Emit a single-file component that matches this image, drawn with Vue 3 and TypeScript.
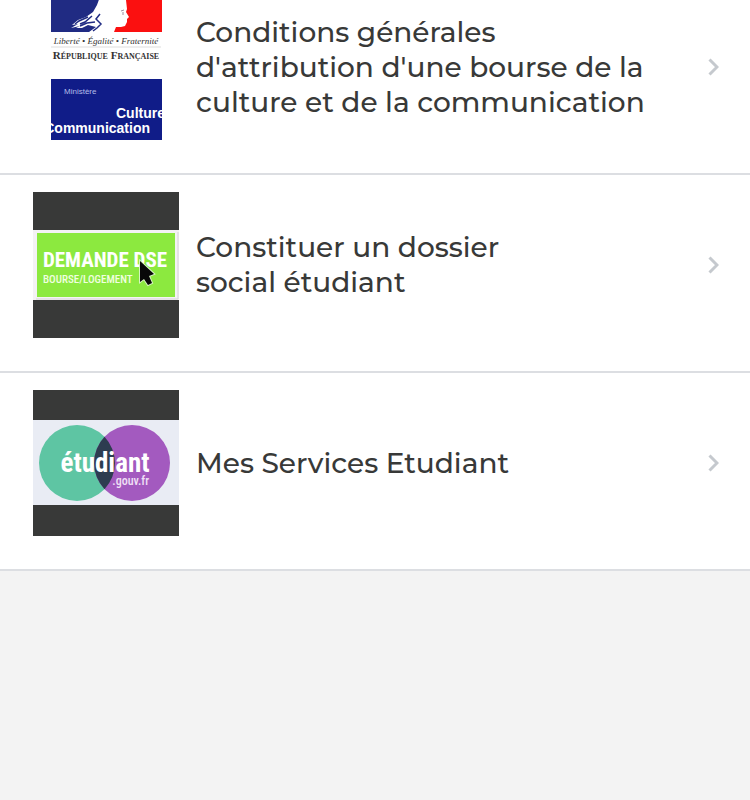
<script setup lang="ts">
type Thumb = 'culture' | 'dse' | 'etudiant'

interface Service {
  id: Thumb
  title: string
  href: string
}

const services: Service[] = [
  {
    id: 'culture',
    title: "Conditions générales d'attribution d'une bourse de la culture et de la communication",
    href: '#culture',
  },
  { id: 'dse', title: 'Constituer un dossier social étudiant', href: '#dse' },
  { id: 'etudiant', title: 'Mes Services Etudiant', href: '#etudiant' },
]
</script>

<template>
  <main class="screen">
    <ul class="list">
      <li v-for="service in services" :key="service.id" class="item">
        <a class="row" :href="service.href">
          <svg v-if="service.id === 'culture'" class="thumb" viewBox="0 0 146 146" aria-hidden="true">
            <defs>
              <clipPath id="ministry"><rect x="18" y="85" width="111" height="61" /></clipPath>
            </defs>
            <rect width="146" height="146" fill="#fff" />
            <path d="M18 0H76V38H18Z" fill="#202b83" />
            <path d="M76 0H129V38H76Z" fill="#fb1010" />
            <path d="M68 0 H88 L93 6 L94 15 L93 18 L96 23 L94 25 L94 28 L92 32 L88 33 L83 33 L81 38 H56 L63 33 L55 31 L49 34 H43 L47 32 L38 34 L45 30 L39 31 L45 26 L53 23 L60 18 L64 11Z" fill="#fff" />
            <path d="M55 23 L46 27 L42 30 M59 22 L52 28 L47 30 M62 28 L54 29 L47 32 M67 20 L63 25 L68 30 L64 34 L60 37" fill="none" stroke="#202b83" stroke-width="1.500" />
            <path d="M88 17 L91 16 M90 18 V21" fill="none" stroke="#9b8e9e" stroke-width="1" />
            <text class="motto" x="73" y="50" text-anchor="middle">Liberté • Égalité • Fraternité</text>
            <path d="M18 53H128" stroke="#ddd" stroke-width="1" />
            <text class="republic" x="73" y="65" text-anchor="middle">R<tspan class="small-caps">ÉPUBLIQUE</tspan> F<tspan class="small-caps">RANÇAISE</tspan></text>
            <rect x="18" y="85" width="111" height="61" fill="#101c88" />
            <g clip-path="url(#ministry)">
              <text class="ministry" x="31" y="100">Ministère</text>
              <text class="domain" x="83" y="124">Culture</text>
              <text class="domain" x="117" y="139" text-anchor="end">Communication</text>
            </g>
          </svg>

          <svg v-else-if="service.id === 'dse'" class="thumb" viewBox="0 0 146 146" aria-hidden="true">
            <rect width="146" height="146" fill="#383938" />
            <rect y="38" width="146" height="70" fill="#f4f2f4" />
            <path d="M3 107H145V40" fill="none" stroke="#d5d2d5" stroke-width="1" />
            <rect x="4" y="41" width="138" height="64" fill="#8ce93f" />
            <text class="dse-title" x="72" y="75" text-anchor="middle">DEMANDE DSE</text>
            <text class="dse-sub" x="10" y="91">BOURSE/LOGEMENT</text>
            <path d="M107 69 V90 L111 87 L115 93 L119 91 L116 84 L121 82Z" fill="#080808" stroke="#d5f4c0" stroke-width="2" paint-order="stroke" />
          </svg>

          <svg v-else class="thumb" viewBox="0 0 146 146" aria-hidden="true">
            <rect width="146" height="146" fill="#383938" />
            <rect y="30" width="146" height="85" fill="#e9ecf4" />
            <circle cx="44" cy="73" r="38" fill="#5ec5a3" />
            <circle cx="99" cy="73" r="38" fill="#a35abf" />
            <path d="M71.500 46.800 A38 38 0 0 1 71.500 99.200 A38 38 0 0 1 71.500 46.800Z" fill="#2d3c50" />
            <text class="brand" x="72" y="82" text-anchor="middle">étudiant</text>
            <text class="brand-domain" x="116" y="95" text-anchor="end">.gouv.fr</text>
          </svg>

          <span class="title">{{ service.title }}</span>

          <svg class="chevron" viewBox="0 0 12 20" aria-hidden="true">
            <path d="M2.500 2.500 L10 10 L2.500 17.500" />
          </svg>
        </a>
      </li>
    </ul>
  </main>
</template>

<style>
body {
  margin: 0;
  background: #f3f3f3;
}
</style>

<style scoped>
.screen {
  overflow: hidden;
  font-family: Montserrat, Inter, sans-serif;
}

/* The list is scrolled slightly past its first row's top edge. */
.list {
  list-style: none;
  margin: -23px 0 0;
  padding: 0;
  background: #fff;
}

.item {
  border-bottom: 2px solid #dcdee2;
}

.row {
  display: flex;
  align-items: center;
  padding: 17px 31px 33px 33px;
  color: #383938;
  text-decoration: none;
}

.thumb {
  flex: none;
  width: 146px;
  height: 146px;
}

.title {
  flex: 0 1 470px;
  padding-left: 17px;
  font-size: 28px;
  font-weight: 500;
  line-height: 35px;
  text-wrap: pretty;
}

.chevron {
  flex: none;
  width: 12px;
  height: 20px;
  margin-left: auto;
  fill: none;
  stroke: #c5c9ce;
  stroke-width: 3px;
}

.motto {
  font: italic 9px "Liberation Serif", serif;
  fill: #333;
}

.republic {
  font: bold 11px "Liberation Serif", serif;
  fill: #333;
}

.small-caps {
  font-size: 8px;
}

.ministry {
  font: 8px "Liberation Sans", sans-serif;
  fill: #b4bce8;
}

.domain {
  font: bold 14px "Liberation Sans", sans-serif;
  fill: #fff;
}

.dse-title {
  font: bold 21px "Roboto Condensed", "Liberation Sans Narrow", "Liberation Sans", sans-serif;
  fill: #fff;
}

.dse-sub {
  font: 500 11px "Roboto Condensed", "Liberation Sans Narrow", "Liberation Sans", sans-serif;
  fill: #f0ffe0;
}

.brand {
  font: bold 27px "Roboto Condensed", "Liberation Sans Narrow", "Liberation Sans", sans-serif;
  fill: #fff;
}

.brand-domain {
  font: 500 12px "Roboto Condensed", "Liberation Sans Narrow", "Liberation Sans", sans-serif;
  fill: #f0e0f6;
}
</style>
